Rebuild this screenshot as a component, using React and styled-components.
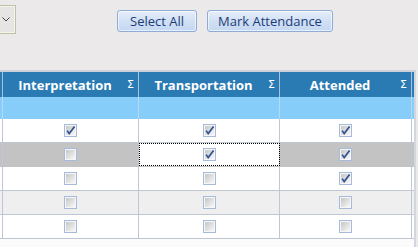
import React from "react";
import styled, { createGlobalStyle } from "styled-components";

const Global = createGlobalStyle`
  html, body { margin: 0; padding: 0; }
  body {
    background: #ebe9ea;
    font-family: "Open Sans", "Noto Sans", sans-serif;
  }
`;

const Page = styled.div`
  width: 418px;
  height: 247px;
  overflow: hidden;
  display: flex;
  flex-direction: column;
`;

const Toolbar = styled.div`
  height: 70px;
  flex: none;
  display: flex;
  align-items: flex-start;
`;

const Dropdown = styled.div`
  margin-top: 5px;
  margin-left: -30px;
  width: 39px;
  height: 27px;
  border: 1px solid #c2c1a6;
  box-shadow: inset 0 0 0 1px #f4f4ee;
  background: #e6e5e3;
  display: flex;
  align-items: center;
  justify-content: flex-end;
  padding-right: 5px;
  box-sizing: content-box;
`;

const Buttons = styled.div`
  display: flex;
  gap: 10px;
  margin-top: 10px;
  margin-left: 101px;
`;

const Button = styled.button`
  height: 22px;
  padding: 0 ${(p) => p.$pad}px;
  border: 1px solid #8eacd6;
  border-radius: 3px;
  background: linear-gradient(#e6eefa, #cfdff4 55%, #c5d8f2);
  box-shadow: inset 0 0 0 1px rgba(255, 255, 255, 0.6);
  color: #1d3b78;
  font-family: "Open Sans", "Noto Sans", sans-serif;
  font-size: 13px;
  line-height: 20px;
  cursor: pointer;
`;

const Grid = styled.div`
  flex: 1;
  margin-left: -37px;
  width: 451px;
  border-top: 2px solid #cdd1da;
  border-right: 2px solid #d3d6de;
  background: #fbfbfb;
  display: flex;
  flex-direction: column;
`;

const cols = "40px 136px 141px 132px";

const HeaderRow = styled.div`
  display: grid;
  grid-template-columns: ${cols};
  height: 25px;
  background: #2a7ab4;
`;

const HeaderCell = styled.div`
  border-right: 1px solid #a4c2dc;
  display: flex;
  align-items: center;
  color: #fff;
  font-weight: 700;
  font-size: 13px;
  padding: 0 4px 0 ${(p) => p.$padLeft || 0}px;
  box-sizing: border-box;
`;

const HeaderLabel = styled.span`
  flex: 1;
  text-align: center;
`;

const Sigma = styled.span`
  font-weight: 400;
  font-size: 11px;
  font-family: "DejaVu Sans", sans-serif;
`;

const FilterRow = styled.div`
  display: grid;
  grid-template-columns: ${cols};
  height: 22px;
  background: #86cdf9;
`;

const FilterCell = styled.div`
  border-right: 1px solid #b7d9ef;
`;

const Row = styled.div`
  display: grid;
  grid-template-columns: ${cols};
  height: 24px;
  box-sizing: border-box;
  background: ${(p) => (p.$selected ? "#c3c3c3" : p.$alt ? "#efefef" : "#ffffff")};
  border-bottom: 1px solid ${(p) => (p.$selected ? "#c3c3c3" : "#c1c6d4")};
`;

const Cell = styled.div`
  border-right: 1px solid #c1c6d4;
  display: flex;
  align-items: center;
  justify-content: center;
  background: ${(p) => (p.$focused ? "#ffffff" : "transparent")};
  outline: ${(p) => (p.$focused ? "1px dotted #000" : "none")};
  outline-offset: -1px;
`;

const CheckBox = ({ checked }) => (
  <svg width="13" height="13" viewBox="0 0 13 13">
    <defs>
      <linearGradient id="cbfill" x1="0" y1="0" x2="1" y2="1">
        <stop offset="0" stopColor="#c6c6c6" />
        <stop offset="1" stopColor="#f8f8f8" />
      </linearGradient>
    </defs>
    <rect x="0.5" y="0.5" width="12" height="12" fill="#f4f6fa" stroke="#a7bad7" />
    <rect x="2" y="2" width="9" height="9" fill="url(#cbfill)" />
    {checked && (
      <path
        d="M3.2 6.6 L5.2 9.6 L10.6 2.4"
        stroke="#2f5190"
        strokeWidth="1.7"
        fill="none"
      />
    )}
  </svg>
);

const rows = [
  { vals: [true, true, true] },
  { vals: [false, true, true], selected: true, focus: 1 },
  { vals: [false, false, true] },
  { vals: [false, false, false], alt: true },
  { vals: [false, false, false] },
];

const headers = ["Interpretation", "Transportation", "Attended"];

export default function App() {
  return (
    <>
      <Global />
      <Page>
        <Toolbar>
          <Dropdown>
            <svg width="8" height="5" viewBox="0 0 8 5">
              <path d="M0.5 0.5 L4 4 L7.5 0.5" stroke="#444" strokeWidth="1" fill="none" />
            </svg>
          </Dropdown>
          <Buttons>
            <Button $pad={12}>Select All</Button>
            <Button $pad={10}>Mark Attendance</Button>
          </Buttons>
        </Toolbar>
        <Grid>
          <HeaderRow>
            <HeaderCell />
            {headers.map((h) => (
              <HeaderCell key={h} $padLeft={0}>
                <HeaderLabel>{h}</HeaderLabel>
                <Sigma>Σ</Sigma>
              </HeaderCell>
            ))}
          </HeaderRow>
          <FilterRow>
            <FilterCell />
            <FilterCell />
            <FilterCell />
            <FilterCell />
          </FilterRow>
          {rows.map((r, i) => (
            <Row key={i} $selected={r.selected} $alt={r.alt}>
              <Cell />
              {r.vals.map((v, j) => (
                <Cell key={j} $focused={r.focus === j}>
                  <CheckBox checked={v} />
                </Cell>
              ))}
            </Row>
          ))}
        </Grid>
      </Page>
    </>
  );
}
